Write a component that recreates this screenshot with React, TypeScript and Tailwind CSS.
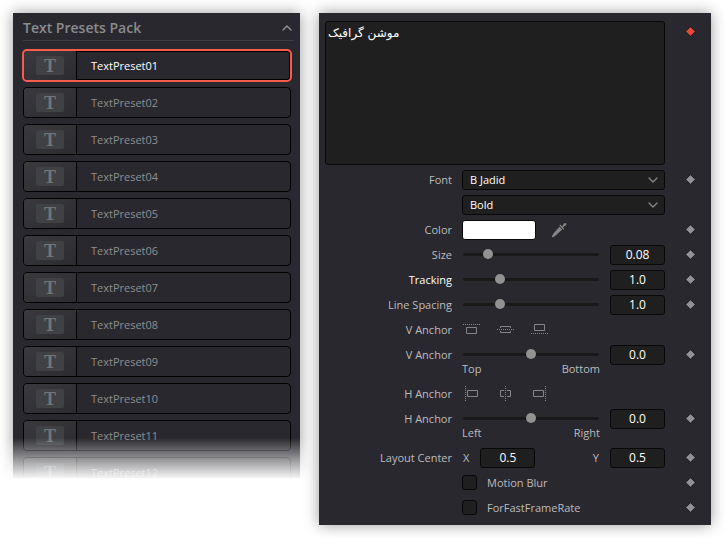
import type { ReactNode } from 'react';
import { ChevronDown, ChevronUp } from 'lucide-react';
import clsx from 'clsx';

const presets = Array.from({ length: 12 }, (_, i) => `TextPreset${String(i + 1).padStart(2, '0')}`);

const fieldClass = 'h-5 rounded-[3px] border border-[#08080a] bg-[#1f1f1f] text-white';

function Keyframe({ active = false, label }: { active?: boolean; label: string }) {
  return (
    <button type="button" aria-label={`Keyframe ${label}`} className="shrink-0">
      <svg width="11" height="11" viewBox="0 0 11 11" className="block">
        <path d="M5.5 .7 10.3 5.5 5.5 10.3 .7 5.5Z" fill={active ? '#e64b3d' : '#929297'} stroke="#111114" strokeWidth="0.8" />
      </svg>
    </button>
  );
}

type RowProps = {
  label?: string;
  htmlFor?: string;
  highlight?: boolean;
  keyframe?: boolean;
  name: string;
  children: ReactNode;
};

function Row({ label, htmlFor, highlight, keyframe = true, name, children }: RowProps) {
  return (
    <div className="flex h-[25px] items-center">
      <label
        htmlFor={htmlFor}
        className={clsx('w-[127px] shrink-0 text-right', highlight ? 'text-white' : 'text-[#bcbcbf]')}
      >
        {label}
      </label>
      <div className="ml-[10px] flex min-w-0 flex-1 items-center">{children}</div>
      <div className="flex w-[46px] shrink-0 pl-5">{keyframe && <Keyframe label={name} />}</div>
    </div>
  );
}

function NumberField({ id, value, label }: { id?: string; value: string; label: string }) {
  return (
    <input
      id={id}
      type="text"
      defaultValue={value}
      aria-label={label}
      className={clsx(fieldClass, 'w-[55px] shrink-0 text-center text-xs')}
    />
  );
}

type SliderProps = { id: string; label: string; min: number; max: number; step: number; value: string };

function Slider({ id, label, min, max, step, value }: SliderProps) {
  return (
    <>
      <input
        id={id}
        type="range"
        min={min}
        max={max}
        step={step}
        defaultValue={value}
        className="mr-[11px] ml-px h-[10px] min-w-0 flex-1 appearance-none bg-transparent [&::-webkit-slider-runnable-track]:h-[3px] [&::-webkit-slider-runnable-track]:rounded-full [&::-webkit-slider-runnable-track]:bg-[#19191a] [&::-webkit-slider-thumb]:-mt-1 [&::-webkit-slider-thumb]:size-[10px] [&::-webkit-slider-thumb]:appearance-none [&::-webkit-slider-thumb]:rounded-full [&::-webkit-slider-thumb]:bg-[#929292]"
      />
      <NumberField value={value} label={`${label} value`} />
    </>
  );
}

function RangeEnds({ from, to }: { from: string; to: string }) {
  return (
    <div className="-mt-[5px] mr-[111px] mb-[5px] ml-[137px] flex h-[14px] items-center justify-between text-[#bcbcbf]">
      <span>{from}</span>
      <span>{to}</span>
    </div>
  );
}

function Select({ id, label, value }: { id?: string; label: string; value: string }) {
  return (
    <div className="relative w-full">
      <select id={id} aria-label={label} className={clsx(fieldClass, 'block w-full appearance-none pr-7 pl-[7px]')}>
        <option>{value}</option>
      </select>
      <ChevronDown size={16} strokeWidth={2} className="pointer-events-none absolute top-[2px] right-1 text-[#858588]" />
    </div>
  );
}

function Eyedropper() {
  return (
    <svg width="16" height="16" viewBox="0 0 16 16" fill="#858587" className="block">
      <path d="M9.6 3.6 11 5 12.9 1.6C13.6.7 15 .8 15.3 1.6 15.7 2.4 15.3 3 14.6 3.5L11.4 5.6Z" />
      <path d="M8.3 3.4 9.3 2.6 13.3 6.7 12.4 7.7Z" />
      <path d="M8.4 4.8 11.1 7.6 4.4 13.8 1.5 15.4.8 14.7 2.3 11.8Z" />
    </svg>
  );
}

const anchorIcons = {
  top: { dots: 'M0 2.5H17', box: 'M3.5 5.5H13.5V11.5H3.5Z' },
  middle: { dots: 'M0 7.5H17', box: 'M3.5 6V4.5H13.5V6M3.5 9V10.5H13.5V9' },
  bottom: { dots: 'M0 11.5H17', box: 'M3.5 2.5H13.5V8.5H3.5Z' },
  left: { dots: 'M2.5 0V15', box: 'M4.5 4.5H14.5V10.5H4.5Z' },
  center: { dots: 'M8.5 0V15', box: 'M7 4.5H3.5V10.5H7M10 4.5H13.5V10.5H10' },
  right: { dots: 'M14.5 0V15', box: 'M2.5 4.5H12.5V10.5H2.5Z' },
};

function AnchorButtons({ kinds }: { kinds: (keyof typeof anchorIcons)[] }) {
  return (
    <div className="flex gap-4 pl-px">
      {kinds.map((kind) => (
        <button key={kind} type="button" aria-label={`Anchor ${kind}`}>
          <svg width="18" height="15" viewBox="0 0 18 15" fill="none" className="block">
            <path d={anchorIcons[kind].dots} stroke="#858589" strokeDasharray="1 1" />
            <path d={anchorIcons[kind].box} stroke="#858589" />
          </svg>
        </button>
      ))}
    </div>
  );
}

function PresetList() {
  return (
    <section className="relative self-start bg-[#29282e] shadow-[0_0_14px_rgba(0,0,0,0.4)]">
      <div className="max-h-[465px] overflow-hidden pr-[6px] pl-[10px]">
        <header className="flex h-7 items-center justify-between border-b border-[#3c3c41] pt-[2px]">
          <h2 className="text-sm font-semibold text-[#8b8b8e]">Text Presets Pack</h2>
          <button type="button" aria-label="Collapse" className="-mr-px">
            <ChevronUp size={16} strokeWidth={2} className="text-[#929295]" />
          </button>
        </header>
        <ul className="flex flex-col gap-[6px] pt-[9px] pr-[3px]">
          {presets.map((name, i) => (
            <li key={name}>
              <button
                type="button"
                className={clsx(
                  'flex h-[31px] w-full items-stretch rounded-[4px] border border-black text-left',
                  i === 0
                    ? 'text-white shadow-[inset_0_0_0_1px_#000] outline-2 -outline-offset-1 outline-[#f75b4b]'
                    : 'text-[#8e8e90]',
                )}
              >
                <span className="flex w-[53px] items-center justify-center rounded-l-[3px] border-r border-black bg-linear-to-br from-[#39393e] to-[#2b2b30]">
                  <span className="flex h-[19px] w-7 items-center justify-center rounded-xs bg-[#404145] font-['Liberation_Serif',serif] text-lg leading-none font-bold text-[#737478]">
                    T
                  </span>
                </span>
                <span className="self-center pl-[14px]">{name}</span>
              </button>
            </li>
          ))}
        </ul>
      </div>
      {/* list fades out into the page */}
      <div className="pointer-events-none absolute -inset-x-[13px] -bottom-5 h-[60px] bg-linear-to-b from-transparent to-white to-[42px]" />
    </section>
  );
}

function Inspector() {
  return (
    <section className="relative bg-[#29282e] pt-2 pb-[5px] pl-[6px] shadow-[0_0_14px_rgba(0,0,0,0.4)]">
      <div className="mb-[2px] flex items-start">
        <textarea
          aria-label="Styled text"
          dir="rtl"
          defaultValue="موشن گرافیک"
          className="block h-36 min-w-0 flex-1 resize-none rounded-[3px] border border-[#08080a] bg-[#1f1f1f] px-[2px] py-px text-left font-['DejaVu_Sans',sans-serif] text-xs leading-5 text-white"
        />
        <div className="w-[46px] shrink-0 pt-[5px] pl-5">
          <Keyframe active label="Styled text" />
        </div>
      </div>
      <Row label="Font" htmlFor="font" name="Font">
        <Select id="font" label="Font" value="B Jadid" />
      </Row>
      <Row name="Style" keyframe={false}>
        <Select label="Font style" value="Bold" />
      </Row>
      <Row label="Color" htmlFor="color" name="Color">
        <button id="color" type="button" className="h-5 w-[74px] rounded-[3px] border border-[#08080a] bg-white" />
        <button type="button" aria-label="Pick color" className="ml-[15px]">
          <Eyedropper />
        </button>
      </Row>
      <Row label="Size" htmlFor="size" name="Size">
        <Slider id="size" label="Size" min={0} max={0.5} step={0.01} value="0.08" />
      </Row>
      <Row label="Tracking" htmlFor="tracking" highlight name="Tracking">
        <Slider id="tracking" label="Tracking" min={0} max={4} step={0.1} value="1.0" />
      </Row>
      <Row label="Line Spacing" htmlFor="line-spacing" name="Line Spacing">
        <Slider id="line-spacing" label="Line Spacing" min={0} max={4} step={0.1} value="1.0" />
      </Row>
      <Row label="V Anchor" name="V Anchor" keyframe={false}>
        <AnchorButtons kinds={['top', 'middle', 'bottom']} />
      </Row>
      <Row label="V Anchor" htmlFor="v-anchor" name="V Anchor">
        <Slider id="v-anchor" label="V Anchor" min={-1} max={1} step={0.1} value="0.0" />
      </Row>
      <RangeEnds from="Top" to="Bottom" />
      <Row label="H Anchor" name="H Anchor" keyframe={false}>
        <AnchorButtons kinds={['left', 'center', 'right']} />
      </Row>
      <Row label="H Anchor" htmlFor="h-anchor" name="H Anchor">
        <Slider id="h-anchor" label="H Anchor" min={-1} max={1} step={0.1} value="0.0" />
      </Row>
      <RangeEnds from="Left" to="Right" />
      <Row label="Layout Center" name="Layout Center">
        <div className="flex w-full items-center justify-between text-[#bcbcbf]">
          <div className="flex items-center gap-[11px] pl-px">
            <label htmlFor="center-x">X</label>
            <NumberField id="center-x" value="0.5" label="Center X" />
          </div>
          <div className="flex items-center gap-[11px]">
            <label htmlFor="center-y">Y</label>
            <NumberField id="center-y" value="0.5" label="Center Y" />
          </div>
        </div>
      </Row>
      {['Motion Blur', 'ForFastFrameRate'].map((name) => (
        <Row key={name} name={name}>
          <label className="flex items-center gap-[10px] text-[#bcbcbf]">
            <input
              type="checkbox"
              className="size-[15px] appearance-none rounded-[3px] border border-[#08080a] bg-[#1f1f1f] checked:bg-[#929297]"
            />
            {name}
          </label>
        </Row>
      ))}
    </section>
  );
}

export default function App() {
  return (
    <main className="grid min-h-screen grid-cols-[287fr_392fr] items-start gap-[19px] bg-white pt-[13px] pr-[14px] pl-[13px] font-['Open_Sans',sans-serif] text-[11px] leading-[14px]">
      <PresetList />
      <Inspector />
    </main>
  );
}
